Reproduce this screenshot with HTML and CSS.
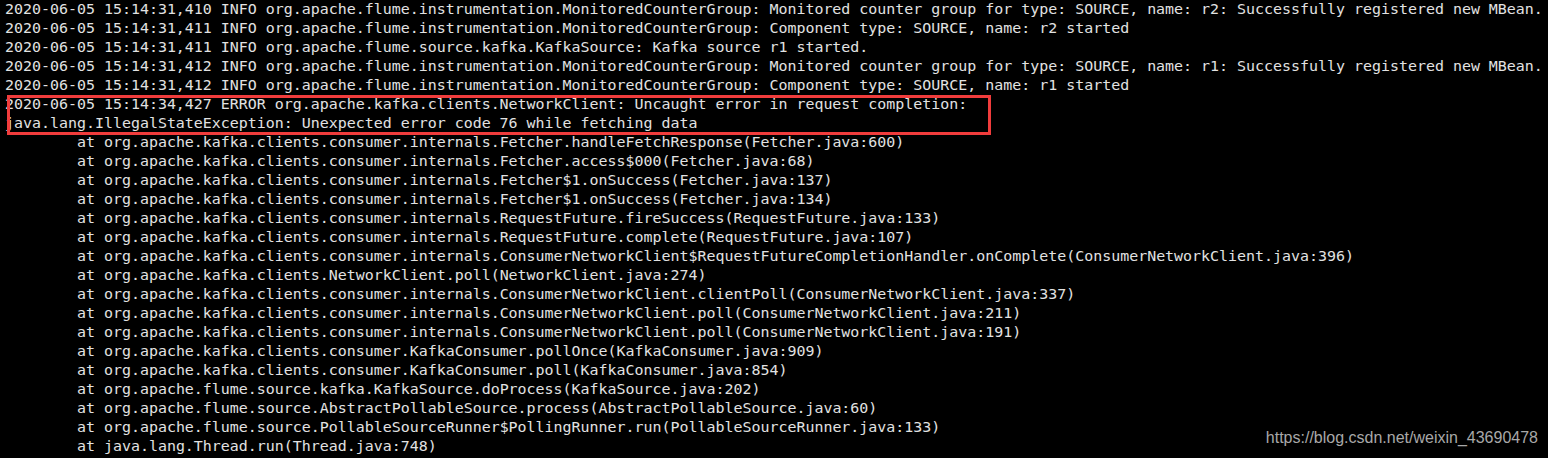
FILE: index.html
```html
<!DOCTYPE html>
<html lang="en">
<head>
    <meta charset="UTF-8">
    <meta name="viewport" content="width=device-width, initial-scale=1.0">
    <title>Flume Kafka log</title>
    <link rel="stylesheet" href="styles.css">
</head>
<body>
    <div class="terminal">
<pre class="log">2020-06-05 15:14:31,410 INFO org.apache.flume.instrumentation.MonitoredCounterGroup: Monitored counter group for type: SOURCE, name: r2: Successfully registered new MBean.
2020-06-05 15:14:31,411 INFO org.apache.flume.instrumentation.MonitoredCounterGroup: Component type: SOURCE, name: r2 started
2020-06-05 15:14:31,411 INFO org.apache.flume.source.kafka.KafkaSource: Kafka source r1 started.
2020-06-05 15:14:31,412 INFO org.apache.flume.instrumentation.MonitoredCounterGroup: Monitored counter group for type: SOURCE, name: r1: Successfully registered new MBean.
2020-06-05 15:14:31,412 INFO org.apache.flume.instrumentation.MonitoredCounterGroup: Component type: SOURCE, name: r1 started
2020-06-05 15:14:34,427 ERROR org.apache.kafka.clients.NetworkClient: Uncaught error in request completion:
java.lang.IllegalStateException: Unexpected error code 76 while fetching data
	at org.apache.kafka.clients.consumer.internals.Fetcher.handleFetchResponse(Fetcher.java:600)
	at org.apache.kafka.clients.consumer.internals.Fetcher.access$000(Fetcher.java:68)
	at org.apache.kafka.clients.consumer.internals.Fetcher$1.onSuccess(Fetcher.java:137)
	at org.apache.kafka.clients.consumer.internals.Fetcher$1.onSuccess(Fetcher.java:134)
	at org.apache.kafka.clients.consumer.internals.RequestFuture.fireSuccess(RequestFuture.java:133)
	at org.apache.kafka.clients.consumer.internals.RequestFuture.complete(RequestFuture.java:107)
	at org.apache.kafka.clients.consumer.internals.ConsumerNetworkClient$RequestFutureCompletionHandler.onComplete(ConsumerNetworkClient.java:396)
	at org.apache.kafka.clients.NetworkClient.poll(NetworkClient.java:274)
	at org.apache.kafka.clients.consumer.internals.ConsumerNetworkClient.clientPoll(ConsumerNetworkClient.java:337)
	at org.apache.kafka.clients.consumer.internals.ConsumerNetworkClient.poll(ConsumerNetworkClient.java:211)
	at org.apache.kafka.clients.consumer.internals.ConsumerNetworkClient.poll(ConsumerNetworkClient.java:191)
	at org.apache.kafka.clients.consumer.KafkaConsumer.pollOnce(KafkaConsumer.java:909)
	at org.apache.kafka.clients.consumer.KafkaConsumer.poll(KafkaConsumer.java:854)
	at org.apache.flume.source.kafka.KafkaSource.doProcess(KafkaSource.java:202)
	at org.apache.flume.source.AbstractPollableSource.process(AbstractPollableSource.java:60)
	at org.apache.flume.source.PollableSourceRunner$PollingRunner.run(PollableSourceRunner.java:133)
	at java.lang.Thread.run(Thread.java:748)</pre>
        <div class="highlight"></div>
        <div class="watermark">https://blog.csdn.net/weixin_43690478</div>
    </div>
</body>
</html>
```

FILE: styles.css
```css
html, body {
    margin: 0;
    background-color: #000;
    height: 100%;
}
.terminal {
    position: relative;
    height: 458px;
    overflow: hidden;
    background-color: #000;
}
.log {
    margin: 0;
    padding: 0 5px;
    font-family: "DejaVu Sans Mono", monospace;
    font-size: 14.95px;
    line-height: 19px;
    color: #e2e2e2;
    tab-size: 8;
    white-space: pre;
}
.highlight {
    position: absolute;
    left: 7px;
    top: 95px;
    width: 978px;
    height: 34px;
    border: 3px solid #f03c3c;
}
.watermark {
    position: absolute;
    right: 10px;
    top: 428px;
    font-family: "Liberation Sans", Arial, sans-serif;
    font-size: 16px;
    line-height: 20px;
    color: #a8a8a8;
}
```
